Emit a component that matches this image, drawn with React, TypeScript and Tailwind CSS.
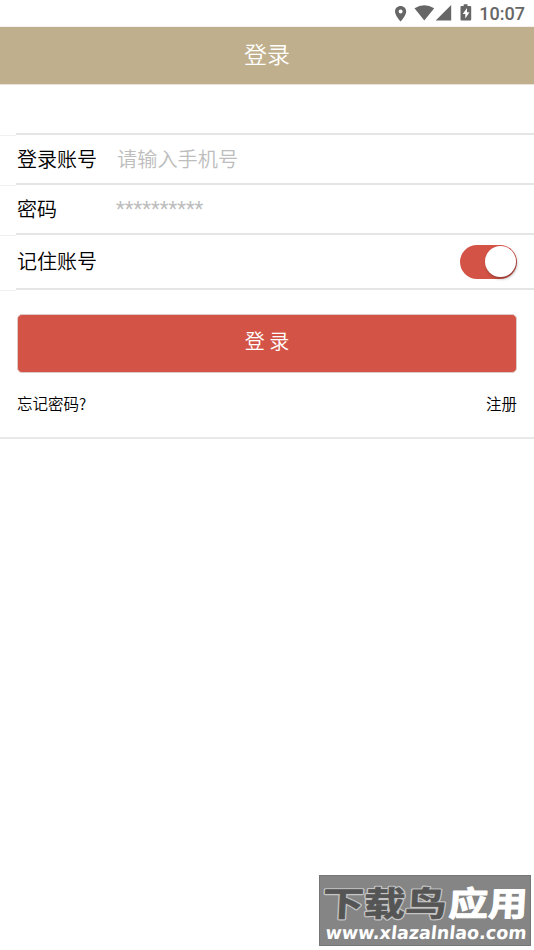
import { useState } from 'react';
import type { ReactNode } from 'react';

function StatusBar() {
  return (
    <div className="h-[26px] flex items-center justify-end pr-[9px] border-b border-[#f3f1ed] box-content">
      <svg className="w-[77px] h-[26px] shrink-0 mr-[7.500px]" viewBox="0 0 77 26" fill="#666666">
        {/* Location */}
        <path fillRule="evenodd" d="M5.600 6C2.500 6 0 8.400 0 11.400c0 4 5.600 10 5.600 10s5.600-6 5.600-10C11.200 8.400 8.700 6 5.600 6zm0 3.500a2 2 0 1 1 0 4 2 2 0 0 1 0-4z" />
        {/* Wifi */}
        <path d="M19.500 8.300Q29.300 2.200 39.200 8.300L29.300 20.500z" />
        {/* Signal */}
        <path d="M56.200 5v15.500H40.700z" />
        {/* Battery */}
        <path fillRule="evenodd" d="M68.700 4.300h3.800v1.700h2.700q1 0 1 1v12.500q0 1-1 1H66.500q-1 0-1-1V7q0-1 1-1h2.200zM72 8l-4.300 6h2.600v4.600l4.200-6.300h-2.500z" />
      </svg>
      <span className="relative top-px font-['Roboto',sans-serif] font-medium text-[18px] leading-none text-[#666666]">10:07</span>
    </div>
  );
}

function Row({ label, className, children }: { label: string; className: string; children: ReactNode }) {
  return (
    <div className="flex">
      <div className="w-4 shrink-0 -mb-px border-b border-[#f0f0f0]" />
      <div className={`flex-1 flex items-center pl-px pr-[17px] border-b-2 border-[#e5e5e5] ${className}`}>
        {label && <label className="w-[100px] text-[20px] leading-[30px] text-black">{label}</label>}
        {children}
      </div>
    </div>
  );
}

function Toggle({ checked, onChange }: { checked: boolean; onChange: () => void }) {
  return (
    <button
      role="switch"
      aria-checked={checked}
      onClick={onChange}
      className={`ml-auto mt-0.5 w-[57px] h-[34px] rounded-full p-[1px] flex items-center ${checked ? 'bg-[#d35447] justify-end' : 'bg-gray-300 justify-start'}`}
    >
      <span className="size-[31px] mb-px rounded-full bg-white shadow-[1px_2px_3px_rgba(0,0,0,0.3)]" />
    </button>
  );
}

function Watermark() {
  return (
    <div className="absolute left-[319px] top-[875px] w-[212px] h-[71px] bg-[#858585] border border-[#757575]">
      <svg className="w-full h-full overflow-visible" viewBox="0 0 210 69" fontFamily="'Noto Sans CJK SC', sans-serif" fontWeight="700">
        <g transform="translate(2 40) skewX(-3)" fontSize="34" strokeLinejoin="round">
          <text x="0" textLength="124" lengthAdjust="spacingAndGlyphs" fill="#c4c4c4" stroke="#c4c4c4" strokeWidth="3">下载鸟</text>
          <text x="0" textLength="124" lengthAdjust="spacingAndGlyphs" fill="#555555" stroke="#555555" strokeWidth="0.700">下载鸟</text>
          <text x="126" textLength="79" lengthAdjust="spacingAndGlyphs" fill="#ffffff" stroke="#ffffff" strokeWidth="1">应用</text>
        </g>
        <text
          transform="translate(5 63) skewX(-6)"
          textLength="201"
          lengthAdjust="spacingAndGlyphs"
          fontFamily="'DejaVu Sans', sans-serif"
          fontWeight="700"
          fontSize="18"
          fill="#ffffff"
        >
          www.xlazalnlao.com
        </text>
      </svg>
    </div>
  );
}

export default function App() {
  const [remember, setRemember] = useState(true);

  return (
    <div className="relative w-full h-[950px] overflow-hidden bg-white font-['Noto_Sans_CJK_SC',sans-serif] font-[350]">
      <StatusBar />

      <header className="h-[58px] bg-[#bfaf8c] border-b border-[#e8e2d6] flex items-center justify-center pb-1">
        <h1 className="text-[23px] leading-none text-white font-[350]">登录</h1>
      </header>

      {/* Login form */}
      <main className="border-b-2 border-[#e8e8e8] h-[354px]">
        <Row label="" className="h-[50px]">{null}</Row>
        <Row label="登录账号" className="h-[50px]">
          <input type="text" placeholder="请输入手机号" className="flex-1 min-w-0 text-[20.200px] leading-[30px] outline-none placeholder:text-[#bdbdbd]" />
        </Row>
        <Row label="密码" className="h-[50px]">
          <input
            type="password"
            placeholder="**********"
            className="flex-1 min-w-0 -ml-px font-['Roboto',sans-serif] font-normal text-[20.300px] leading-[30px] outline-none placeholder:text-[#bdbdbd]"
          />
        </Row>
        <Row label="记住账号" className="h-[55px] pb-0.5">
          <Toggle checked={remember} onChange={() => setRemember(!remember)} />
        </Row>

        <div className="px-[17px] pt-[24px]">
          <button className="w-full h-[59px] rounded-[5px] border border-[#dfc9c6] bg-[#d35447] text-[20px] leading-none text-white pb-1.5">
            登 录
          </button>
          <div className="flex justify-between pt-[18px] text-[15.500px] leading-6 text-black">
            <a>忘记密码?</a>
            <a>注册</a>
          </div>
        </div>
      </main>

      <Watermark />
    </div>
  );
}
